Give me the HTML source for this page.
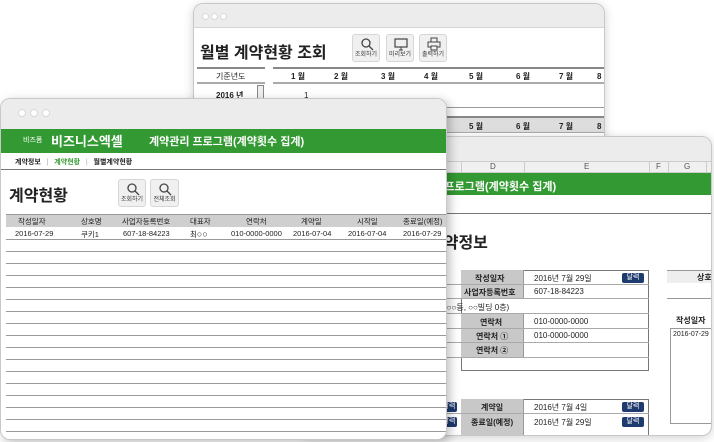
<!DOCTYPE html><html><head><meta charset="utf-8"><style>
*{margin:0;padding:0;box-sizing:border-box}
body{width:714px;height:442px;background:#fff;position:relative;overflow:hidden;font-family:"Liberation Sans","Noto Sans CJK KR",sans-serif;color:#222}
.a{position:absolute}
.win{position:absolute;background:#fff;border:1px solid #c8c8c8;border-radius:10px;overflow:hidden;box-shadow:0 2px 10px rgba(0,0,0,.18)}
.tb{position:absolute;left:0;right:0;top:0;background:#ececec;border-bottom:1px solid #d5d5d5}
.dot{position:absolute;width:7px;height:7px;border-radius:50%;background:#fff;border:1px solid #d8d8d8}
.t{position:absolute;white-space:nowrap;font-size:8px}
.btn{position:absolute;width:28px;height:28px;background:#f0f0f0;border:1px solid #d6d6d6;border-radius:3px;text-align:center;font-size:6px;color:#333}
.btn span{position:absolute;left:0;right:0;bottom:3px}
.btn svg{position:absolute;left:7px;top:2px}
.hl{position:absolute;height:1px;background:#999}
.nav{background:#1e3a6e;color:#fff;font-size:7px;text-align:center;border-radius:2px;line-height:10px}
</style></head><body>

<!-- back window -->
<div class="win" style="left:193px;top:3px;width:412px;height:200px">
 <div class="tb" style="height:24px"></div>
 <div class="dot" style="left:8px;top:9px"></div><div class="dot" style="left:17px;top:9px"></div><div class="dot" style="left:26px;top:9px"></div>
 <div class="t" style="left:6px;top:35px;font-size:16px;font-weight:bold">월별 계약현황 조회</div>
 <div class="btn" style="left:158px;top:30px"><svg width="14" height="14" viewBox="0 0 14 14"><circle cx="6" cy="6" r="4" fill="none" stroke="#444" stroke-width="1.3"/><path d="M9 9l4 4" stroke="#444" stroke-width="1.3"/></svg><span>조회하기</span></div>
 <div class="btn" style="left:192px;top:30px"><svg width="14" height="14" viewBox="0 0 14 14"><rect x="1" y="2" width="12" height="8" fill="none" stroke="#444" stroke-width="1.2"/><path d="M5 13h4M7 10v3" stroke="#444"/></svg><span>미리보기</span></div>
 <div class="btn" style="left:225px;top:30px"><svg width="14" height="14" viewBox="0 0 14 14"><rect x="4" y="1" width="6" height="4" fill="none" stroke="#444"/><rect x="1" y="5" width="12" height="5" fill="none" stroke="#444"/><rect x="4" y="9" width="6" height="4" fill="#f0f0f0" stroke="#444"/></svg><span>출력하기</span></div>
 <div class="a" style="left:3px;top:63px;width:68px;height:17px;border-top:2px solid #888;border-bottom:2px solid #aaa"></div>
 <div class="t" style="left:22px;top:67px">기준년도</div>
 <div class="a" style="left:79px;top:63px;width:340px;height:17px;border-top:2px solid #888;border-bottom:2px solid #aaa"></div>
 <div class="t" style="left:22px;top:86px;font-weight:bold">2016 년</div>
 <div class="a" style="left:63px;top:81px;width:7px;height:18px;border:1px solid #888;background:#eee"></div>
 <div class="t" style="left:110px;top:87px">1</div>
 <div class="a" style="left:79px;top:103px;width:340px;height:1px;background:#999"></div>
 <div class="a" style="left:79px;top:112px;width:340px;height:17px;background:#ddd;border-top:2px solid #888;border-bottom:1px solid #aaa"></div>
 <div class="t" style="left:97px;top:67px;font-weight:bold">1 월</div><div class="t" style="left:140px;top:67px;font-weight:bold">2 월</div><div class="t" style="left:187px;top:67px;font-weight:bold">3 월</div><div class="t" style="left:230px;top:67px;font-weight:bold">4 월</div><div class="t" style="left:275px;top:67px;font-weight:bold">5 월</div><div class="t" style="left:322px;top:67px;font-weight:bold">6 월</div><div class="t" style="left:365px;top:67px;font-weight:bold">7 월</div><div class="t" style="left:403px;top:67px;font-weight:bold">8 월</div>
 <div class="t" style="left:275px;top:117px;font-weight:bold">5 월</div><div class="t" style="left:322px;top:117px;font-weight:bold">6 월</div><div class="t" style="left:365px;top:117px;font-weight:bold">7 월</div><div class="t" style="left:403px;top:117px;font-weight:bold">8 월</div>
</div>

<!-- middle window -->
<div class="win" style="left:300px;top:136px;width:412px;height:300px">
 <div class="tb" style="height:24px;border:none"></div>
 <div class="a" style="left:0;top:24px;right:0;height:12px;background:#f0f0f0;border-top:1px solid #ccc;border-bottom:1px solid #ccc"></div>
 <div class="a" style="left:160px;top:24px;width:1px;height:12px;background:#ccc"></div><div class="a" style="left:223px;top:24px;width:1px;height:12px;background:#ccc"></div><div class="a" style="left:348px;top:24px;width:1px;height:12px;background:#ccc"></div><div class="a" style="left:367px;top:24px;width:1px;height:12px;background:#ccc"></div><div class="a" style="left:405px;top:24px;width:1px;height:12px;background:#ccc"></div>
 <div class="t" style="left:189px;top:25px;color:#555">D</div><div class="t" style="left:283px;top:25px;color:#555">E</div><div class="t" style="left:355px;top:25px;color:#555">F</div><div class="t" style="left:383px;top:25px;color:#555">G</div>
 <div class="a" style="left:0;top:36px;right:0;height:22px;background:#339a33"></div>
 <div class="t" style="left:100px;top:41px;color:#fff;font-size:11px;font-weight:bold">계약관리 프로그램(계약횟수 집계)</div>
 <div class="a" style="left:0;top:76px;right:0;height:1px;background:#777"></div>
 <div class="t" style="left:128px;top:92px;font-size:16px;font-weight:bold">계약정보</div>
 <div class="a" style="left:160px;top:133px;width:188px;height:101px;border:1px solid #777"></div>
 <div class="a" style="left:160px;top:133px;width:63px;height:28px;background:#c8c8c8;border-right:1px solid #999"></div>
 <div class="a" style="left:160px;top:176px;width:63px;height:44px;background:#c8c8c8;border-right:1px solid #999"></div>
 <div class="hl" style="left:100px;top:147px;width:248px;background:#aaa"></div><div class="hl" style="left:100px;top:161px;width:248px;background:#aaa"></div><div class="hl" style="left:100px;top:176px;width:248px;background:#aaa"></div><div class="hl" style="left:100px;top:191px;width:248px;background:#aaa"></div><div class="hl" style="left:100px;top:205px;width:248px;background:#aaa"></div><div class="hl" style="left:100px;top:220px;width:248px;background:#aaa"></div>
 <div class="t" style="left:174px;top:136px;font-weight:bold">작성일자</div><div class="t" style="left:233px;top:136px">2016년 7월 29일</div><div class="a nav" style="left:321px;top:136px;width:22px">달력</div>
 <div class="t" style="left:163px;top:150px;font-weight:bold">사업자등록번호</div><div class="t" style="left:233px;top:150px">607-18-84223</div>
 <div class="t" style="left:143px;top:165px">(○○동, ○○빌딩 0층)</div>
 <div class="t" style="left:179px;top:180px;font-weight:bold">연락처</div><div class="t" style="left:233px;top:180px">010-0000-0000</div>
 <div class="t" style="left:175px;top:194px;font-weight:bold">연락처 ①</div><div class="t" style="left:233px;top:194px">010-0000-0000</div>
 <div class="t" style="left:175px;top:208px;font-weight:bold">연락처 ②</div>
 <div class="a" style="left:366px;top:133px;width:50px;height:13px;background:#eee;border-top:1px solid #999"></div>
 <div class="t" style="left:396px;top:135px;font-weight:bold">상호</div>
 <div class="a" style="left:366px;top:161px;width:50px;height:1px;background:#999"></div>
 <div class="t" style="left:375px;top:178px;font-weight:bold">작성일자</div>
 <div class="a" style="left:369px;top:191px;width:50px;height:96px;border:1px solid #999"></div>
 <div class="t" style="left:372px;top:194px;font-size:7px">2016-07-29</div>
 <div class="a" style="left:160px;top:262px;width:188px;height:40px;border:1px solid #777"></div>
 <div class="a" style="left:160px;top:262px;width:63px;height:40px;background:#c8c8c8;border-right:1px solid #999"></div>
 <div class="hl" style="left:140px;top:276px;width:208px;background:#aaa"></div>
 <div class="t" style="left:180px;top:265px;font-weight:bold">계약일</div><div class="t" style="left:233px;top:265px">2016년 7월 4일</div><div class="a nav" style="left:321px;top:265px;width:22px">달력</div>
 <div class="t" style="left:170px;top:280px;font-weight:bold">종료일(예정)</div><div class="t" style="left:233px;top:280px">2016년 7월 29일</div><div class="a nav" style="left:321px;top:280px;width:22px">달력</div>
 <div class="a nav" style="left:140px;top:265px;width:16px">달력</div><div class="a nav" style="left:140px;top:280px;width:16px">달력</div>
</div>

<!-- front window -->
<div class="win" style="left:0;top:98px;width:447px;height:342px;box-shadow:3px 3px 10px rgba(0,0,0,.25)">
 <div class="tb" style="height:30px;border:none"></div>
 <div class="dot" style="left:17px;top:10px;width:8px;height:8px"></div><div class="dot" style="left:29px;top:10px;width:8px;height:8px"></div><div class="dot" style="left:41px;top:10px;width:8px;height:8px"></div>
 <div class="a" style="left:0;top:30px;right:0;height:24px;background:#339a33"></div>
 <div class="t" style="left:22px;top:36px;color:#fff;font-size:7px">비즈폼</div>
 <div class="t" style="left:50px;top:32px;color:#fff;font-size:13px;font-weight:bold">비즈니스엑셀</div>
 <div class="t" style="left:148px;top:34px;color:#fff;font-size:11px;font-weight:bold">계약관리 프로그램(계약횟수 집계)</div>
 <div class="t" style="left:14px;top:58px;font-size:7px;font-weight:bold">계약정보 &nbsp;&nbsp;<span style="color:#aaa;font-weight:normal">|</span>&nbsp;&nbsp; <span style="color:#339a33">계약현황</span> &nbsp;&nbsp;<span style="color:#aaa;font-weight:normal">|</span>&nbsp;&nbsp; 월별계약현황</div>
 <div class="a" style="left:0;top:70px;right:0;height:1px;background:#777"></div>
 <div class="t" style="left:8px;top:83px;font-size:16px;font-weight:bold">계약현황</div>
 <div class="btn" style="left:117px;top:80px;width:28px;height:28px"><svg width="14" height="14" viewBox="0 0 14 14"><circle cx="6" cy="6" r="4" fill="none" stroke="#444" stroke-width="1.3"/><path d="M9 9l4 4" stroke="#444" stroke-width="1.3"/></svg><span>조회하기</span></div>
 <div class="btn" style="left:149px;top:80px;width:29px;height:28px"><svg width="14" height="14" viewBox="0 0 14 14"><circle cx="6" cy="6" r="4" fill="none" stroke="#444" stroke-width="1.3"/><path d="M9 9l4 4" stroke="#444" stroke-width="1.3"/></svg><span>전체조회</span></div>
 <div class="a" style="left:5px;top:115px;width:442px;height:13px;background:#cfcfcf;border-top:1px solid #999"></div>
 <div class="t" style="left:17px;top:117px;font-size:7.5px">작성일자</div><div class="t" style="left:80px;top:117px;font-size:7.5px">상호명</div><div class="t" style="left:121px;top:117px;font-size:7.5px">사업자등록번호</div><div class="t" style="left:189px;top:117px;font-size:7.5px">대표자</div><div class="t" style="left:245px;top:117px;font-size:7.5px">연락처</div><div class="t" style="left:300px;top:117px;font-size:7.5px">계약일</div><div class="t" style="left:356px;top:117px;font-size:7.5px">시작일</div><div class="t" style="left:402px;top:117px;font-size:7.5px">종료일(예정)</div>
 <div class="t" style="left:14px;top:130px;font-size:7.5px">2016-07-29</div><div class="t" style="left:80px;top:130px;font-size:7.5px">쿠키1</div><div class="t" style="left:122px;top:130px;font-size:7.5px">607-18-84223</div><div class="t" style="left:189px;top:130px;font-size:7.5px">최<span style="font-size:9px">○○</span></div><div class="t" style="left:230px;top:130px;font-size:7.5px">010-0000-0000</div><div class="t" style="left:292px;top:130px;font-size:7.5px">2016-07-04</div><div class="t" style="left:347px;top:130px;font-size:7.5px">2016-07-04</div><div class="t" style="left:402px;top:130px;font-size:7.5px">2016-07-29</div>
 <div class="a" style="left:5px;top:140px;width:442px;height:200px;background:repeating-linear-gradient(to bottom,#999 0,#999 1px,#fff 1px,#fff 12px)"></div>
</div>
</body></html>
